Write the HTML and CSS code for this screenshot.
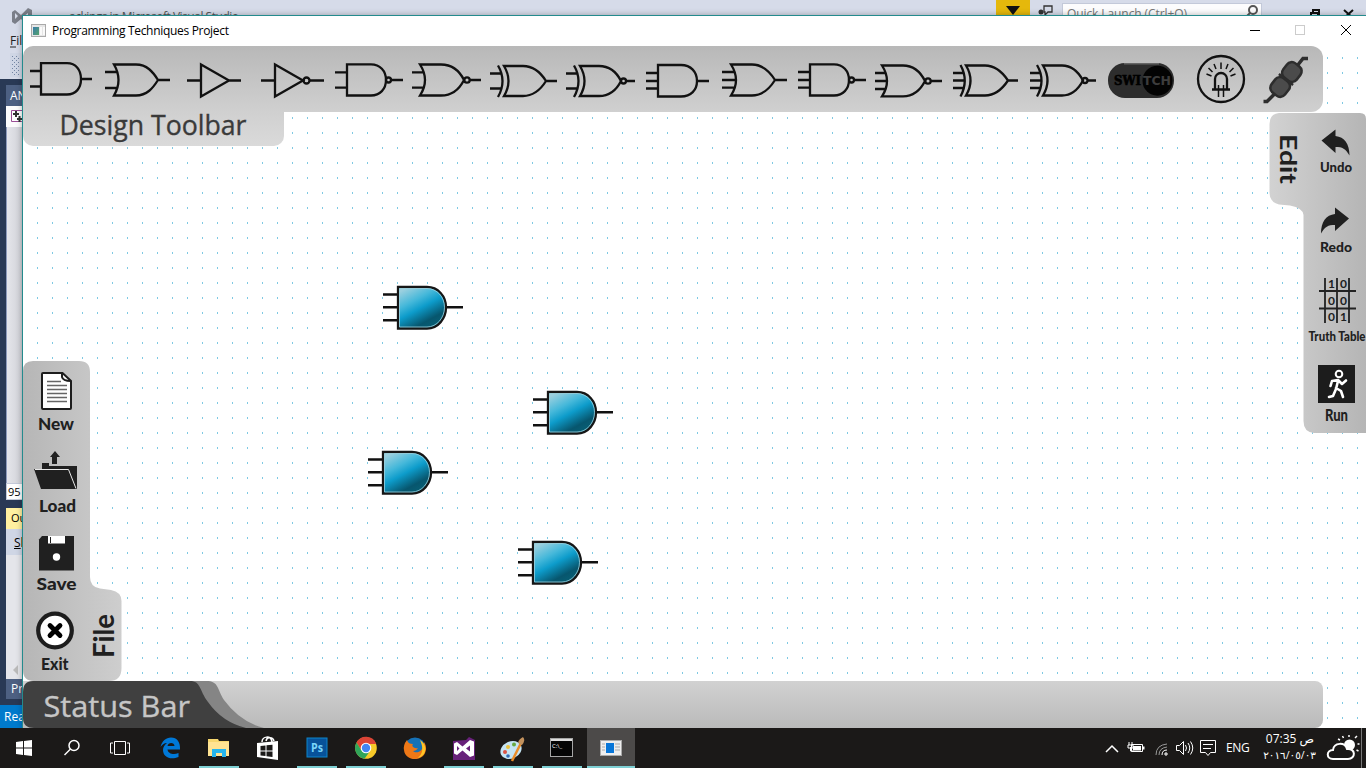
FILE: index.html
```
<!DOCTYPE html>
<html lang="en">
<head>
<meta charset="utf-8">
<title>Programming Techniques Project</title>
<link rel="stylesheet" href="styles.css">
</head>
<body>
<div class="desktop">
  <div class="studio">
    <div class="studio-top">
      <svg width="1366" height="79" viewBox="0 0 1366 79">
        <path d="M12 12l3-2 6 5 7-7 4 2v14l-4 2-7-7-6 5-3-2zM15 13v6l3-3zM28 13l-4 3 4 4z" fill="#7b7f89" fill-rule="evenodd"/>
        <text x="69" y="21" textLength="170" class="studio-title">ackings in  Microsoft Visual Studio</text>
        <rect x="996" width="34" height="16" fill="#e5b80c"/><path d="M1006 6h14l-7 9z" fill="#111"/>
        <path d="M1044 6h8v6h-4l-3 3v-3h-1z" fill="none" stroke="#333" stroke-width="1.3"/><circle cx="1041" cy="12" r="2.5" fill="#333"/>
        <rect x="1062.5" y="3.5" width="199" height="20" fill="#fcfcfd" stroke="#c3c9d9"/>
        <text x="1067" y="18" textLength="120" class="quick">Quick Launch (Ctrl+Q)</text>
        <circle cx="1253" cy="10" r="4" fill="none" stroke="#555" stroke-width="2"/><path d="M1250 13l-3 3" stroke="#555" stroke-width="2"/>
        <path d="M1311 15v-2h7v3M1313 13v-3h6v5" fill="none" stroke="#111" stroke-width="2"/><path d="M1344 10l9 8M1353 10l-9 8" stroke="#111" stroke-width="2"/>
        <text x="10" y="45" class="menu">File</text><path d="M10 47h6" stroke="#222"/>
        <rect x="10" y="53" width="12" height="24" fill="#cfd6e5"/>
        <path d="M12.500 56v18M16.500 56v18M14.500 58v18M18.500 58v18" stroke="#7385a3" stroke-dasharray="1 3"/>
      </svg>
    </div>
    <div class="studio-side">
      <div class="side-head">AN</div>
      <div class="side-tool"><svg width="16" height="20" viewBox="6 106 16 20"><path d="M22 110.500H11.500v11H22" fill="#fff" stroke="#9b4f96"/><path d="M13 114h6M16 111v6M17 119h5M19.500 116v6" stroke="#333" stroke-width="2"/></svg></div>
      <div class="side-page"></div>
      <div class="side-zoom">95 %</div>
      <div class="side-output">Output</div>
      <div class="side-show"><u>S</u>how</div>
      <div class="side-list"><i></i></div>
      <div class="side-props">Pr</div>
    </div>
    <div class="studio-status">Ready</div>
  </div>

  <main class="app">
    <header class="titlebar">
      <svg width="16" height="14" viewBox="0 0 16 14"><defs><linearGradient id="thumb" x2="1" y2="1"><stop stop-color="#397baa"/><stop offset="1" stop-color="#55a36d"/></linearGradient></defs><rect x=".5" y=".5" width="14" height="12" fill="#e6e6e6" stroke="#aaa"/><rect x="2" y="3" width="6" height="8" fill="url(#thumb)"/><path d="M9 3h2v8H9zM12 3h2v8h-2z" fill="#fafafa"/></svg>
      <span class="caption">Programming Techniques Project</span>
      <svg class="controls" width="120" height="30" viewBox="1246 16 120 30"><path d="M1250 30.500h10" stroke="#000"/><rect x="1295.500" y="25.500" width="9" height="9" fill="none" stroke="#ccc"/><path d="M1341 25l10 10M1351 25l-10 10" stroke="#000"/></svg>
    </header>

    <section class="client">
      <div class="toolbar">
        <div class="gates">
          <svg width="75" viewBox="23 46 75 66"><path d="M41 63.200H67C76 63.200 81 70 81 79S76 94.500 67 94.500H41ZM30 71H41M30 86.500H41M81 79H92"/></svg>
          <svg width="80" viewBox="98 46 80 66"><path d="M114 64.500H136C147 64.500 153 72 158 80 153 88 147 95.500 136 95.500H114Q123 80 114 64.500ZM105 72H118M105 88H118M158 80H170"/></svg>
          <svg width="74" viewBox="178 46 74 66"><path d="M201 64.500V96.500L229 80.500ZM187 80.500H201M229 80.500H241"/></svg>
          <svg width="78" viewBox="252 46 78 66"><path d="M275 64.500V96.500L303 80.500ZM261 80.500H275M310 80.500H324"/><circle cx="306.500" cy="80.500" r="3"/></svg>
          <svg width="77" viewBox="330 46 77 66"><path d="M347 64.300H371C380 64.300 386 71 386 80S380 95.500 371 95.500H347ZM335 72.300H347M335 87.700H347M391 80H403"/><circle cx="388.500" cy="80" r="2.500"/></svg>
          <svg width="78" viewBox="407 46 78 66"><path d="M420 64.500H441C453 64.500 460 72 464 80 460 88 453 95.500 441 95.500H420Q430 80 420 64.500ZM412 72.300H424M412 87.700H424M469 80H481"/><circle cx="467" cy="80" r="2.700"/></svg>
          <svg width="76" viewBox="485 46 76 66"><path d="M504 66H523C534 66 541 73 546 81 541 89 534 96 523 96H504Q513 81 504 66ZM498 65.500Q507 81 498 97M490 73.500H501M490 88.500H501M546 81H557"/></svg>
          <svg width="80" viewBox="561 46 80 66"><path d="M580 66H599C610 66 617 73 621 81 617 89 610 96 599 96H580Q589 81 580 66ZM574 65.500Q583 81 574 97M566 73.500H577M566 88.500H577M626 81H635"/><circle cx="623.500" cy="81" r="2.500"/></svg>
          <svg width="75" viewBox="641 46 75 66"><path d="M658 65H681C691 65 697 72 697 81S691 96.500 681 96.500H658ZM646 73H658M646 81H658M646 88.500H658M697 81H709"/></svg>
          <svg width="77" viewBox="716 46 77 66"><path d="M731 64.500H752C763 64.500 770 72 775 80 770 88 763 95.500 752 95.500H731Q741 80 731 64.500ZM722 72H735M722 80H735M722 87.700H735M775 80H787"/></svg>
          <svg width="77" viewBox="793 46 77 66"><path d="M810 64.300H834C843 64.300 849 71 849 80S843 95.500 834 95.500H810ZM798 72H810M798 80H810M798 87.700H810M854 80H866"/><circle cx="851.500" cy="80" r="2.500"/></svg>
          <svg width="77" viewBox="870 46 77 66"><path d="M882 65.500H903C914 65.500 921 73 925 81 921 89 914 96.300 903 96.300H882Q892 81 882 65.500ZM875 73H886M875 81H886M875 89H886M931 81H942"/><circle cx="928" cy="81" r="2.700"/></svg>
          <svg width="77" viewBox="947 46 77 66"><path d="M966 65.500H985C996 65.500 1003 73 1008 80.500 1003 88 996 95.500 985 95.500H966Q975 80.500 966 65.500ZM960.500 65Q969 80.500 960.500 96.500M953 73H963M953 80.500H965M953 88H963M1008 80.500H1018"/></svg>
          <svg width="78" viewBox="1024 46 78 66"><path d="M1043 65.500H1062C1073 65.500 1079 73 1083 80.500 1079 88 1073 95.500 1062 95.500H1043Q1052 80.500 1043 65.500ZM1037 65Q1046 80.500 1037 96.500M1030 73H1040M1030 80.500H1041M1030 88H1040M1088 80.500H1096"/><circle cx="1085" cy="80.500" r="2.500"/></svg>
          <svg class="plain" width="84" viewBox="1102 46 84 66"><rect x="1108" y="63" width="66" height="35" rx="17" fill="#2d2d2d"/><rect x="1124" y="63" width="35" height="1.500" fill="#666"/><circle cx="1157.500" cy="80.700" r="15" fill="#030303"/><text x="1114" y="85" textLength="27" lengthAdjust="spacingAndGlyphs" class="switch" fill="#000" stroke="#000">SWI</text><text x="1143" y="85" textLength="28" lengthAdjust="spacingAndGlyphs" class="switch light" fill="#3c3c3c">TCH</text></svg>
          <svg width="69" viewBox="1186 46 69 66"><circle cx="1221" cy="79" r="23"/><path d="M1215 89V79a6 6 0 0 1 12 0V89M1212 89.500H1230"/><path stroke-width="1.500" d="M1218.500 85V97M1223.500 85V97M1221 62.500V69M1214 64l2 5M1228 64l-2 5M1208.500 68l4 4M1233.500 68l-4 4M1206.500 74l5 2M1235.500 74l-5 2"/></svg>
          <svg class="plain" width="68" viewBox="1255 46 68 66"><path d="M1263.500 101.500h3.500l8-8M1297 66l6-7.500h5" fill="none" stroke="#2e2e2e" stroke-width="3.500"/><g transform="translate(1286 79.500) rotate(38)" fill="#4b4b4b" stroke="#2d2d2d" stroke-width="2.500"><rect x="-8.500" y="-18.500" width="17" height="18" rx="6"/><rect x="-8.500" y=".5" width="17" height="18" rx="6"/><path d="M-9 0h18"/></g></svg>
        </div>
        <div class="toolbar-tab"><svg width="261" height="34" viewBox="23 112 261 34"><text x="59.500" y="134.500" textLength="187" lengthAdjust="spacingAndGlyphs">Design Toolbar</text></svg></div>
      </div>

      <div class="board">
        <svg class="gate" style="left:360px;top:239px" viewBox="0 0 80 46"><use href="#and3"/></svg>
        <svg class="gate" style="left:510px;top:344px" viewBox="0 0 80 46"><use href="#and3"/></svg>
        <svg class="gate" style="left:345px;top:404px" viewBox="0 0 80 46"><use href="#and3"/></svg>
        <svg class="gate" style="left:495px;top:494px" viewBox="0 0 80 46"><use href="#and3"/></svg>
        <svg class="defs" width="0" height="0"><defs>
          <linearGradient id="blue" x1=".22" y1="0" x2=".82" y2=".95"><stop stop-color="#9bd0df"/><stop offset=".3" stop-color="#45b8da"/><stop offset=".5" stop-color="#0d9ccb"/><stop offset=".8" stop-color="#07566e"/><stop offset="1" stop-color="#086075"/></linearGradient>
          <g id="and3"><path d="M0 9.500H15M0 22.300H15M0 35.200H15M63 22.300H80" stroke="#111" stroke-width="2.500"/><path d="M15 2H44C55 2 63 11 63 22.300S55 43.500 44 43.500H15Z" fill="url(#blue)" stroke="#161616" stroke-width="2.300"/><path d="M16.500 3.500H44C54 3.500 61.500 12 61.500 22.300S54 42 44 42H16.500Z" fill="none" stroke="#9ed5e2" stroke-width=".8"/></g>
        </defs></svg>
      </div>

      <div class="panel edit">
        <svg width="97" height="320" viewBox="1269 113 97 320">
          <defs><linearGradient id="gEdit"><stop stop-color="#d2d2d2"/><stop offset="1" stop-color="#b5b5b5"/></linearGradient></defs>
          <path d="M1279 113H1360Q1366 113 1366 119V433H1314Q1303.500 432 1303.500 421V215Q1303 208 1290 205.500L1279 204.500Q1269.500 202 1269.500 193V124Q1269.500 114 1279 113Z" fill="url(#gEdit)"/>
          <text transform="translate(1279.500 134) rotate(90)" textLength="50" lengthAdjust="spacingAndGlyphs" font-size="23" class="side-name">Edit</text>
          <path d="M1321.500 140.500l14-11v6.500c9 1 14 8 14 19.500-4-7-7-8.500-14-8.500v6z"/>
          <text x="1320" y="172" textLength="32" lengthAdjust="spacingAndGlyphs" font-size="14">Undo</text>
          <path d="M1349 218.500l-14-11v6.500c-9 1-14 8-14 19.500 4-7 7-8.500 14-8.500v6z"/>
          <text x="1320" y="252" textLength="32" lengthAdjust="spacingAndGlyphs" font-size="14">Redo</text>
          <path d="M1325 278v45M1337 278v45M1349 278v45M1319 291h37M1319 308.500h37" stroke="#222" stroke-width="1.800"/>
          <g class="bits"><text x="1328" y="288">1</text><text x="1340" y="288">0</text><text x="1328" y="305">0</text><text x="1340" y="305">0</text><text x="1328" y="321">0</text><text x="1340" y="321">1</text></g>
          <text x="1308.500" y="341" textLength="57" lengthAdjust="spacingAndGlyphs" font-size="13">Truth Table</text>
          <rect x="1318" y="365" width="37" height="38" fill="#1c1c1c"/><circle cx="1339" cy="374" r="3.300" fill="none" stroke="#fff" stroke-width="2"/><path d="M1329 397l4-1 3-7 2-8M1336 388l5 3 2 6M1330.500 386l1.500-5 6-1 4 4 4-3.500" fill="none" stroke="#fff" stroke-width="2.600" stroke-linecap="round" stroke-linejoin="round"/>
          <text x="1325" y="421" textLength="23" lengthAdjust="spacingAndGlyphs" font-size="16">Run</text>
        </svg>
      </div>

      <div class="panel file">
        <svg width="99" height="320" viewBox="23 361 99 320">
          <defs><linearGradient id="gFile"><stop stop-color="#b6b6b6"/><stop offset="1" stop-color="#cecece"/></linearGradient></defs>
          <path d="M33 361H79Q90 361 90 372V577Q90 587 100 588.500L111 590Q121.500 592 121.500 601V668Q121.500 681 109 681H34Q23 681 23 670V371Q23 361 33 361Z" fill="url(#gFile)"/>
          <path d="M43 373H62.500l8.500 8V408Q71 409 70 409H43Q42 409 42 408V374Q42 373 43 373Z" fill="#fff" stroke="#1d1d1d" stroke-width="2"/><path d="M62 373v4q1 4 9 4" fill="none" stroke="#1d1d1d" stroke-width="2"/><path d="M47 381.500h14M47 385.500h20M47 389.500h20M47 393.500h20M47 397.500h20M47 401.500h20" stroke="#666" stroke-width="1.300"/>
          <text x="38" y="429.500" textLength="36" lengthAdjust="spacingAndGlyphs" font-size="17">New</text>
          <path d="M42 463h7v3h28v23H41l-7-20h8zM50 457l5-6 5 6h-3v7h-5v-7z"/><path d="M35 469.500h33.500l7.500 19" stroke="#e8e8e8" fill="none"/>
          <text x="39" y="512" textLength="37" lengthAdjust="spacingAndGlyphs" font-size="17">Load</text>
          <path d="M42 536H74V570.500H39V539.500Z"/><path d="M48 536h17v7.500H48z" fill="#fff"/><path d="M50 537h1v6h-1z"/><circle cx="56.500" cy="557" r="3.700" fill="#fff"/>
          <text x="36.500" y="589.500" textLength="40" lengthAdjust="spacingAndGlyphs" font-size="17">Save</text>
          <circle cx="55" cy="630.500" r="16.800" fill="#fff" stroke="#1d1d1d" stroke-width="4.200"/><path d="M50 625.500l10 10M60 625.500l-10 10" stroke="#000" stroke-width="4.800" stroke-linecap="round"/>
          <text x="41" y="670" textLength="27.500" lengthAdjust="spacingAndGlyphs" font-size="17">Exit</text>
          <text transform="translate(113.500 658) rotate(-90)" textLength="44" lengthAdjust="spacingAndGlyphs" font-size="28" class="side-name">File</text>
        </svg>
      </div>

      <footer class="statusbar">
        <svg width="300" height="47" viewBox="23 681 300 47"><path d="M185 681H206C219 681 217 689 224 700Q240 722 264 728H220Z" fill="#858585"/><path d="M33 681H190C201 681 199 690 208 702Q222 722 246 728H34Q23 728 23 718V692Q23 681 33 681Z" fill="#404040"/><text x="43.500" y="716.500" textLength="146.500" lengthAdjust="spacingAndGlyphs">Status Bar</text></svg>
      </footer>
    </section>
  </main>

  <nav class="taskbar">
    <svg width="48" viewBox="0 728 48 40"><path d="M16 742l7-1v6.500h-7zM24 741l8-1v7.500h-8zM16 748.500h7v6.500l-7-1zM24 748.500h8v7.500l-8-1z" fill="#fff"/></svg>
    <svg width="48" viewBox="48 728 48 40"><circle cx="74" cy="745.500" r="5" class="line"/><path d="M70.500 749l-6 6" class="line"/></svg>
    <svg width="50" viewBox="96 728 50 40"><path d="M114.500 741.500h11v13h-11zM113 743h-2.500v10h2.500M127 743h2.500v10H127" class="line thin"/></svg>
    <svg width="49" viewBox="146 728 49 40"><path d="M160.500 747C162 741 166 737.500 171 737.500c6 0 9.500 4.500 9 12h-12.500c.5 4 6 6 11 3.500v4c-8 3.500-15.500 0-15.500-7 0-3 1.500-5 4-7-3 0-5 2-6.500 4zm7-1h7c0-4-6.500-4-7 0z" fill="#0078d7" fill-rule="evenodd"/></svg>
    <div class="task open"><svg width="49" viewBox="195 728 49 40"><path d="M208 739h10l1 2h10v15h-21z" fill="#f7d76f"/><path d="M208 742h21v14h-21z" fill="#ffe392"/><path d="M212 757v-8h14v8h-4v-4h-6v4z" fill="#25b5ed"/></svg></div>
    <svg width="49" viewBox="244 728 49 40"><path d="M257 743l21-2v19l-21-3z" fill="#fff"/><path d="M262 742c0-6 9-7 10 0M266 741c1-5 7-4 8 0" class="line"/><path d="M260.500 746l5-.5v5h-5zM266.500 745.300l6-.5v5.700h-6zM260.500 751.500h5v4.500l-5-.6zM266.500 751.500h6v5.500l-6-.8z" fill="#1b1918"/></svg>
    <div class="task open"><svg width="49" viewBox="293 728 49 40"><rect x="307" y="738" width="20" height="19" fill="#07529a" stroke="#0d85cc"/><text x="311" y="752" fill="#79d5fa" font-size="12" font-weight="700" textLength="12" lengthAdjust="spacingAndGlyphs">Ps</text></svg></div>
    <div class="task open"><svg width="49" viewBox="342 728 49 40"><circle cx="366" cy="748" r="10.800" fill="#f7c928"/><path d="M356.500 742.500A10.800 10.800 0 0 1 376.200 744H366l-5 6z" fill="#dc4436"/><path d="M356.500 742.500A10.800 10.800 0 0 0 364.500 758.700l5-7-8.500-2z" fill="#30a55a"/><circle cx="366" cy="748" r="5.300" fill="#fff"/><circle cx="366" cy="748" r="4.200" fill="#4285f4"/></svg></div>
    <svg width="49" viewBox="391 728 49 40"><circle cx="415" cy="748" r="10.500" fill="#1672b7"/><path d="M407 740q-4 5-3 10c1 11 17 12 21 3 2-4 1-8-1-11 0 10-8 12-11 9 2 0 4-1 5-3-4 1-7-2-5-4-3 0-5-1-6-4z" fill="#ee7817"/><path d="M420 740q5 3 5.500 9-1 8-8 9 8-6 2.500-18z" fill="#ffc526"/></svg>
    <div class="task open"><svg width="49" viewBox="440 728 49 40"><path d="M453 741l13-1 3-3 6 3v20h-22z" fill="#68217a"/><path d="M454 743.500l3-1.500 5.500 4.500L470 740l4 1.500v14l-4 1.500-7.500-6.500L457 755l-3-1.500zm3 2.500v5l2.500-2.500zm13-.5l-4 3 4 3z" fill="#fff" fill-rule="evenodd"/></svg></div>
    <div class="task open"><svg width="49" viewBox="489 728 49 40"><ellipse cx="511" cy="750" rx="11" ry="8.500" transform="rotate(-25 511 750)" fill="#c5e4f3"/><circle cx="505" cy="752" r="2" fill="#dc5344"/><circle cx="508" cy="747" r="2" fill="#ecc23d"/><circle cx="514" cy="744.500" r="2" fill="#68a940"/><circle cx="508" cy="756" r="1.800" fill="#336bb5"/><path d="M522 741l-10 20" stroke="#e98c29" stroke-width="2.500"/><path d="M519 744c-2-3 1-5 4-7q3 3-1 8z" fill="#c3925e"/></svg></div>
    <div class="task open"><svg width="49" viewBox="538 728 49 40"><rect x="550.500" y="738.500" width="22" height="18" fill="#050505" stroke="#a6a6a6"/><path d="M551 740h21" stroke="#ddd" stroke-width="2"/><text x="552" y="748" font-size="6" fill="#fff">C:\_</text></svg></div>
    <div class="task open active"><svg width="48" viewBox="587 728 48 40"><rect x="600.500" y="740.500" width="21" height="15" fill="#eee" stroke="#aaa"/><rect x="606" y="743" width="8" height="10" fill="#0876d8"/><path d="M602 744h3M602 747h3M602 750h3M615 744h5M615 747h5M615 750h5" stroke="#aaa"/></svg></div>
    <svg class="tray" width="131" viewBox="1090 728 131 40"><path d="M1106 752l6-6 6 6" class="line"/><path d="M1131.500 744.500h11v7h-11z" class="line thin"/><path d="M1133 746h8v4.500h-8zM1143 746.500h1.500v3h-1.500z" fill="#fff"/><path d="M1129 742v3M1132 742v3M1128 745h5v3h-5zM1130.500 747v4h3" class="line thin"/><path d="M1156 755q0-10 11-11M1159 755q0-7 8-8" class="line thin dim"/><path d="M1162 755q0-5 5-5M1165 755v-2h2v2z" class="line thin"/><path d="M1176.500 745.500h3l4-4v13l-4-4h-3zM1185.500 745q2 3 0 6M1188 743q3.500 5 0 10M1190.500 741.500q4.500 6.500 0 13" class="line thin"/><path d="M1200.500 740.500h15v12h-5l-2.500 3-2.500-3h-5zM1203 744.500h10M1203 748.500h8" class="line thin"/></svg>
    <span class="lang">ENG</span>
    <div class="clock"><span dir="rtl">ص 07:35</span><span class="date">٢٠١٦/٠٥/٠٣</span></div>
    <svg width="46" viewBox="1320 728 46 40"><circle cx="1349.500" cy="745" r="5.500" fill="#fff"/><path d="M1340 740l-2-1M1343.500 738l-1-2M1349 737v-2M1355 738l2-2M1357.500 744h2M1356.500 750l2 1" class="line"/><path d="M1333 759c-7 0-7-9 0-9 1-8 12-8 14-1 9-1 9 10 1 10z" fill="#1b1918" stroke="#fff" stroke-width="2"/><path d="M1361.500 728v40" stroke="#777"/></svg>
  </nav>
</div>
</body>
</html>
```
FILE: styles.css
```
* { box-sizing: border-box; }
body { margin: 0; overflow: hidden; font-family: "Open Sans", "Noto Sans", sans-serif; font-size: 12px; }
svg { display: block; flex: none; }

.desktop { position: relative; display: flex; flex-direction: column; width: 1366px; height: 768px; overflow: hidden; }

/* Background editor window */
.studio { height: 728px; background: #293955; display: flex; flex-direction: column; }
.studio-top { height: 79px; background: #d6dbe9; }
.studio-title { font-size: 12px; fill: #555; }
.quick { font-size: 12px; fill: #777; }
.menu { font-size: 12px; fill: #222; }
.studio-side { flex: 1; width: 40px; margin-left: 6px; padding-top: 6px; display: flex; flex-direction: column; }
.side-head { height: 21px; padding: 2px 4px; background: #4d6082; color: #fff; }
.side-tool { height: 21px; background: #fcfcfc; }
.side-page { height: 356px; background: linear-gradient(90deg, #e4e5ea, #cfd0d6 16px); border-left: 1px solid #8e9bbc; }
.side-zoom { height: 17px; background: #fff; border: 1px solid #c3c9d9; padding-left: 1px; line-height: 15px; font-size: 11px; white-space: nowrap; }
.side-output { height: 21px; margin-top: 8px; background: #fff0a0; padding-left: 5px; line-height: 20px; font-size: 11px; }
.side-show { height: 26px; background: #cfd6e5; padding-left: 8px; line-height: 27px; }
.side-list { height: 124px; background: #e4e5ea; display: flex; align-items: flex-end; padding: 0 0 4px 7px; }
.side-list i { border: 5px solid transparent; border-left: 0; border-right-color: #bbb; }
.side-props { height: 20px; background: #4d6082; color: #fff; padding-left: 5px; line-height: 20px; }
.studio-status { height: 23px; background: #007acc; color: #fff; padding-left: 4px; line-height: 23px; }

/* Circuit designer window */
.app { position: absolute; left: 22px; top: 15px; width: 1344px; height: 713px; border-top: 1px solid #238b8d; border-left: 1px solid #238b8d; background: #fff; box-shadow: 0 0 6px rgba(0, 0, 0, .3); }
.titlebar { height: 30px; display: flex; align-items: center; padding-left: 8px; }
.caption { margin-left: 5px; padding-bottom: 1px; font-size: 12px; letter-spacing: -.31px; color: #000; }
.controls { margin-left: auto; }
.client {
  position: relative; height: 682px;
  display: grid; grid-template-columns: 99px 1fr 97px; grid-template-rows: 67px 248px 72px 248px 47px;
  background-image: conic-gradient(from 90deg at 14px 13px, #7fc9e3 0 90deg, transparent 0);
  background-size: 15px 15px; background-position: 0 13px;
}

.toolbar { grid-area: 1 / 1 / 3 / 4; width: 1300px; height: 100px; }
.gates { display: flex; height: 66px; border-radius: 10px 12px 12px 0; background: linear-gradient(#b8b8b8, #d0d0d0); }
.gates svg { height: 66px; fill: none; stroke: #111; stroke-width: 2.3; }
.gates svg.plain { stroke: none; }
.gates .switch { font: 700 12px "DejaVu Serif", serif; stroke-width: .6px; }
.gates .light { font-family: "DejaVu Sans", sans-serif; }
.toolbar-tab { width: 261px; height: 34px; border-radius: 0 0 10px 10px; background: linear-gradient(#d0d0d0, #dadada); }
.toolbar-tab svg, .panel svg { overflow: visible; }
.toolbar-tab text { font-size: 26.5px; fill: #3a3a3a; stroke: #3a3a3a; stroke-width: .35px; }

.board { grid-area: 1 / 1 / 6 / 4; position: relative; }
.gate { position: absolute; width: 80px; height: 46px; }
.defs { position: absolute; }

.panel { z-index: 1; fill: #202020; font-family: Lato, sans-serif; font-weight: 900; }
.edit { grid-area: 2 / 3 / 4 / 4; }
.file { grid-area: 3 / 1 / 5 / 2; align-self: end; }
.bits { font-size: 12px; font-weight: 700; }
.side-name { font-weight: 700; }

.statusbar { grid-area: 5 / 1 / 6 / 4; width: 1300px; border-radius: 0 8px 8px 0; background: linear-gradient(#d1d1d1, #bababa); z-index: 1; }
.statusbar text { font-size: 30px; fill: #c6c6c6; stroke: #c6c6c6; stroke-width: .35px; }

/* Taskbar */
.taskbar { position: relative; height: 40px; display: flex; align-items: stretch; background: #1b1918; color: #fff; }
.taskbar > svg, .task svg { height: 40px; }
.task.open { background: linear-gradient(#7ed0d4, #7ed0d4) 4px 38px / 40px 2px no-repeat; }
.task.active { background-position: 0 38px; background-size: 48px 2px; background-color: #4c4a49; }
.line { fill: none; stroke: #fff; stroke-width: 1.5; }
.thin { stroke-width: 1; }
.dim { stroke: #999; }
.tray { margin-left: 455px; }
.lang { width: 38px; padding-left: 5px; line-height: 39px; letter-spacing: -.3px; }
.clock { width: 61px; display: flex; flex-direction: column; align-items: flex-end; padding: 3px 6px 0 0; line-height: 16px; font-family: "Open Sans", "DejaVu Sans", sans-serif; font-size: 12px; letter-spacing: -.5px; white-space: nowrap; }
.date { font-size: 10.500px; margin-right: -2px; }
```
